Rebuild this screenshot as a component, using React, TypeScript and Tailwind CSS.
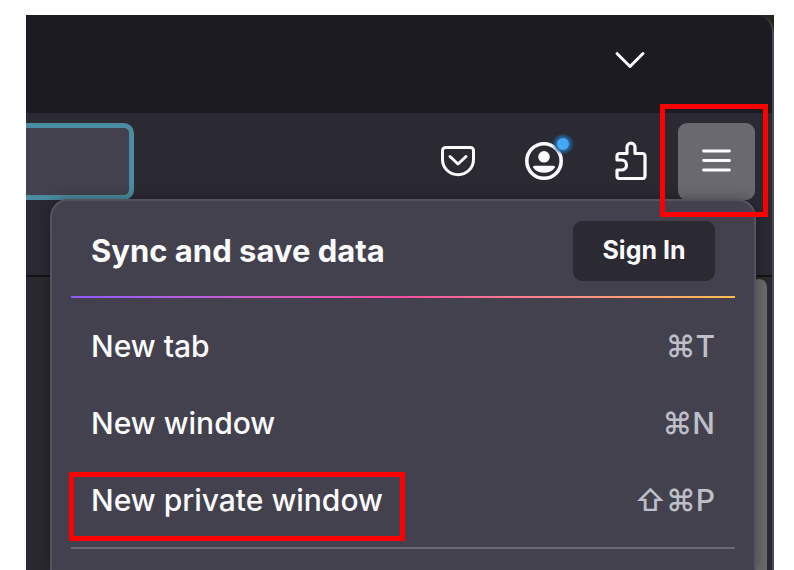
import React from 'react';

interface MenuEntry {
  label: string;
  shortcut: string;
  highlighted?: boolean;
}

const entries: MenuEntry[] = [
  { label: 'New tab', shortcut: '⌘T' },
  { label: 'New window', shortcut: '⌘N' },
  { label: 'New private window', shortcut: '⇧⌘P', highlighted: true },
];

const ChevronIcon = () => (
  <svg width="34" height="22" viewBox="0 0 34 22" fill="none" stroke="currentColor" strokeWidth="3" strokeLinecap="round" strokeLinejoin="round">
    <path d="M3 4.5l13 13 13-13" />
  </svg>
);

const PocketIcon = () => (
  <svg width="36" height="32" viewBox="0 0 36 32" fill="none" stroke="currentColor" strokeWidth="3" strokeLinecap="round" strokeLinejoin="round">
    <path d="M4.5 2.5h25a3 3 0 0 1 3 3v9a15.5 15.2 0 0 1-31 0v-9a3 3 0 0 1 3-3z" />
    <path d="M9 11.5l8 7.5 8-7.5" />
  </svg>
);

const AccountIcon = () => (
  <svg width="40" height="40" viewBox="0 0 40 40">
    <circle cx="19" cy="20" r="17.2" fill="none" stroke="currentColor" strokeWidth="3.6" />
    <circle cx="19" cy="15.8" r="5.8" fill="currentColor" />
    <path d="M9.3 24.8h19.4a1.3 1.3 0 0 1 1.1 2C27.5 30 23.5 31.8 19 31.8S10.5 30 8.2 26.8a1.3 1.3 0 0 1 1.1-2z" fill="currentColor" />
  </svg>
);

const ExtensionsIcon = () => (
  <svg width="34" height="40" viewBox="0 0 34 40" fill="none" stroke="currentColor" strokeWidth="3.2" strokeLinejoin="round">
    <path d="M3 19V15a2.5 2.5 0 0 1 2.5-2.5H13V6.2a4 4 0 0 1 8 0v6.3h7.500A2.5 2.5 0 0 1 31 15v20a2.5 2.5 0 0 1-2.5 2.5h-23A2.5 2.5 0 0 1 3 35v-6h4.5a5 5 0 0 0 0-10z" />
  </svg>
);

const MenuIcon = () => (
  <svg width="30" height="24" viewBox="0 0 30 24" stroke="currentColor" strokeWidth="2.8" strokeLinecap="round">
    <path d="M1.5 2h26M1.5 11.5h26M1.5 21h26" />
  </svg>
);

const toolButton = 'relative flex h-[77px] w-[77px] items-center justify-center rounded-[9px]';

const AppMenu: React.FC = () => (
  <div className="absolute top-[184px] right-4 bottom-0 left-6 rounded-t-[18px] border-2 border-b-0 border-[#55535f] bg-[#42414d] px-[19px] shadow-[0_0_14px_rgba(0,0,0,0.35)]">
    <div className="flex h-[94px] items-center justify-between px-5 pt-1.5">
      <h2 className="text-[31px] leading-9 font-bold">Sync and save data</h2>
      <button className="h-[60px] w-[142px] rounded-[9px] bg-[#2b2a33] text-[25px] font-bold">Sign In</button>
    </div>
    <div className="mt-px h-[2px] bg-linear-to-r from-[#9059ff] via-[#ff4aa2] to-[#ffbd4f]" />

    <div className="pt-[10px]">
      {entries.map((entry) => (
        <button key={entry.label} className="relative flex h-[77px] w-full items-center justify-between px-5 text-[30px] font-medium">
          <span>{entry.label}</span>
          <span className="text-[#bfbfc9]">{entry.shortcut}</span>
          {entry.highlighted && (
            <span className="absolute top-[10px] -left-[2px] h-[69px] w-[336px] border-[5px] border-[#ff0000]" />
          )}
        </button>
      ))}
    </div>
    <hr className="mt-2 border-t-2 border-[#6a6974]" />
  </div>
);

const App: React.FC = () => {
  return (
    <div className="flex h-screen flex-col overflow-hidden bg-white pt-[15px] pr-5 pl-[26px] font-['Inter',sans-serif] text-[#fbfbfe]">
      <div className="flex flex-1 flex-col bg-[#23281c]">
        <div className="relative flex flex-1 flex-col rounded-tr-[18px] border-r-2 border-[#4d4d51] bg-[#2b2a33]">
          {/* Tab strip */}
          <div className="flex h-[98px] justify-end rounded-tr-[16px] bg-[#1c1b22] pr-[103px]">
            <button aria-label="List all tabs" className="flex h-[90px] w-[77px] items-center justify-center">
              <ChevronIcon />
            </button>
          </div>

          {/* Toolbar */}
          <div className="flex h-24 items-center justify-between pr-[17px]">
            <input
              aria-label="Address"
              className="h-[77px] w-[108px] rounded-r-[10px] border-[5px] border-l-0 border-[#4a8ca2] bg-[#42414d] outline-none"
            />
            <div className="flex gap-[9px]">
              <button aria-label="Save to Pocket" className={toolButton}>
                <PocketIcon />
              </button>
              <button aria-label="Account" className={toolButton}>
                <AccountIcon />
                <span className="absolute top-[15px] right-[14px] h-3 w-3 rounded-full bg-[#45a8f5] shadow-[0_0_3px_3px_#25669a]" />
              </button>
              <button aria-label="Extensions" className={toolButton}>
                <ExtensionsIcon />
              </button>
              <button aria-label="Open application menu" className={`${toolButton} bg-[#6a696f]`}>
                <MenuIcon />
                <span className="absolute -top-[19px] -right-[13px] z-10 h-[113px] w-[108px] border-[5px] border-[#ff0000]" />
              </button>
            </div>
          </div>

          {/* Bookmarks bar */}
          <div className="h-[68px] border-b-2 border-[#141318]" />

          {/* Page */}
          <div className="flex flex-1 justify-end bg-[#2a292d] pt-[2px] pr-[5px]">
            <div className="w-4 rounded-t-lg bg-[#6a6a6a]" />
          </div>

          <AppMenu />
        </div>
      </div>
    </div>
  );
};

export default App;
